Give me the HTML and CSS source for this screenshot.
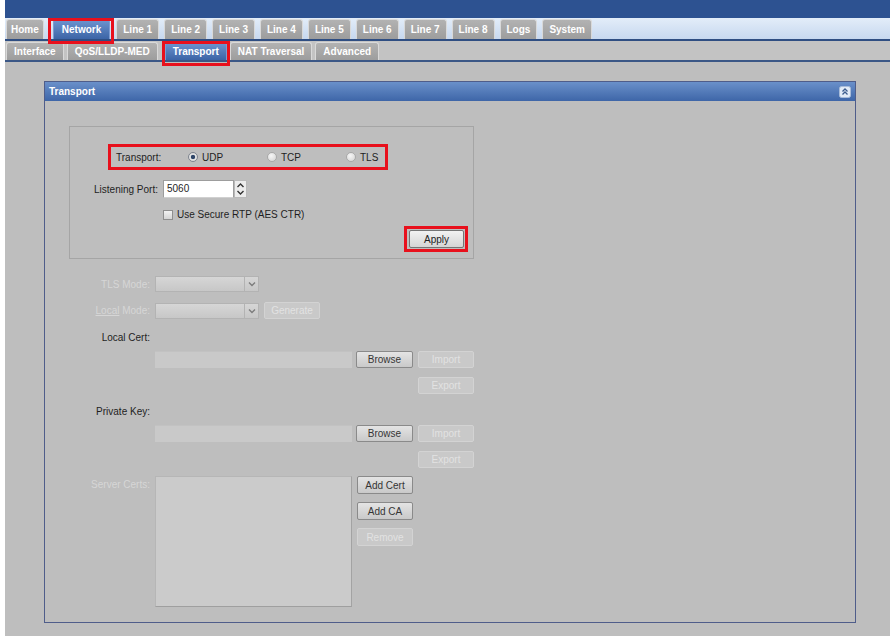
FILE: index.html
```html
<!DOCTYPE html>
<html>
<head>
<meta charset="utf-8">
<title>Transport</title>
<link rel="stylesheet" href="styles.css">
</head>
<body>
<div class="page">
  <div class="topbar"></div>
  <div class="tabs">
    <span class="tab first">Home</span>
    <span class="tab active">Network</span>
    <span class="tab">Line 1</span>
    <span class="tab">Line 2</span>
    <span class="tab">Line 3</span>
    <span class="tab">Line 4</span>
    <span class="tab">Line 5</span>
    <span class="tab">Line 6</span>
    <span class="tab">Line 7</span>
    <span class="tab">Line 8</span>
    <span class="tab">Logs</span>
    <span class="tab">System</span>
  </div>
  <div class="subtabs">
    <span class="stab">Interface</span>
    <span class="stab">QoS/LLDP-MED</span>
    <span class="stab active">Transport</span>
    <span class="stab">NAT Traversal</span>
    <span class="stab">Advanced</span>
  </div>
  <div class="panel">
    <div class="panel-head">
      <span>Transport</span>
      <svg class="collapse" width="12" height="12" viewBox="0 0 12 12">
        <rect x="0.5" y="0.5" width="11" height="11" rx="2" fill="#e2ebf7" stroke="#a9bcd9"/>
        <path d="M3.5 5.5 L6 3 L8.5 5.5 M3.5 8.5 L6 6 L8.5 8.5" fill="none" stroke="#3b5b8c" stroke-width="1.3"/>
      </svg>
    </div>
    <div class="panel-body">
      <div class="box">
        <div class="trow">
          <span class="tlabel">Transport:</span>
          <span class="opt"><span class="radio checked"></span>UDP</span>
          <span class="opt"><span class="radio"></span>TCP</span>
          <span class="opt last"><span class="radio"></span>TLS</span>
        </div>
        <div class="prow">
          <span class="plabel">Listening Port:</span>
          <span class="num">5060</span>
          <span class="spin">
            <svg width="13" height="18" viewBox="0 0 13 18">
              <rect x="0.5" y="0.5" width="12" height="17" fill="#ececec" stroke="#b9b9b9"/>
              <path d="M3.5 7 L6.5 4 L9.5 7" fill="none" stroke="#333" stroke-width="1.4"/>
              <path d="M3.5 11 L6.5 14 L9.5 11" fill="none" stroke="#333" stroke-width="1.4"/>
            </svg>
          </span>
        </div>
        <div class="crow">
          <span class="check"></span>
          <span>Use Secure RTP (AES CTR)</span>
        </div>
        <div class="arow">
          <span class="btn apply">Apply</span>
        </div>
      </div>

      <div class="tls">
        <div class="row r-tls">
          <span class="lbl dis">TLS Mode:</span>
          <span class="select"><span class="sel-arrow"><svg width="8" height="6" viewBox="0 0 8 6"><path d="M1 1.5 L4 4.5 L7 1.5" fill="none" stroke="#7d7d7d" stroke-width="1.4"/></svg></span></span>
        </div>
        <div class="row r-mode">
          <span class="lbl dis"><u>Local</u> Mode:</span>
          <span class="select"><span class="sel-arrow"><svg width="8" height="6" viewBox="0 0 8 6"><path d="M1 1.5 L4 4.5 L7 1.5" fill="none" stroke="#7d7d7d" stroke-width="1.4"/></svg></span></span>
          <span class="btn disabled gen">Generate</span>
        </div>
        <div class="row r-label">
          <span class="lbl">Local Cert:</span>
        </div>
        <div class="row r-input">
          <span class="lbl"></span>
          <span class="field"></span>
          <span class="btn browse">Browse</span>
          <span class="btn disabled imp">Import</span>
        </div>
        <div class="row r-export">
          <span class="btn disabled exp">Export</span>
        </div>
        <div class="row r-label2">
          <span class="lbl">Private Key:</span>
        </div>
        <div class="row r-input">
          <span class="lbl"></span>
          <span class="field"></span>
          <span class="btn browse">Browse</span>
          <span class="btn disabled imp">Import</span>
        </div>
        <div class="row r-export">
          <span class="btn disabled exp">Export</span>
        </div>
        <div class="row r-certs">
          <span class="lbl dis top">Server Certs:</span>
          <span class="area"></span>
          <span class="btncol">
            <span class="btn">Add Cert</span>
            <span class="btn">Add CA</span>
            <span class="btn disabled">Remove</span>
          </span>
        </div>
      </div>
    </div>
  </div>
</div>
</body>
</html>
```

FILE: styles.css
```css
html, body {
  margin: 0;
  padding: 0;
  background: #ffffff;
}
body {
  font-family: "Liberation Sans", Arial, sans-serif;
  font-size: 10px;
  color: #1e1e1e;
}
.page {
  margin: 0 5px;
  height: 636px;
  background: #bebebe;
  display: flex;
  flex-direction: column;
}
.topbar {
  height: 18px;
  background: #2d5291;
  flex: none;
}
.tabs {
  flex: none;
  height: 21px;
  background: linear-gradient(#e3edf9, #c7d8ef);
  border-bottom: 2px solid #2f4e82;
  display: flex;
  align-items: flex-end;
  gap: 5px;
  padding-left: 1px;
}
.tab, .stab {
  box-sizing: border-box;
  color: #ffffff;
  font-weight: bold;
  background: linear-gradient(#b2b2b2, #9d9d9d);
  border: 1px solid #d9d9d9;
  border-bottom: none;
  border-radius: 3px 3px 0 0;
  white-space: nowrap;
}
.tab {
  height: 20px;
  line-height: 19px;
  padding: 0 6px;
}
.tab.first {
  padding: 0 4px;
}
.tab.active {
  background: linear-gradient(#6d94cf, #3c64a6);
  border-color: #7c9bd0;
  position: relative;
  margin: 0 1px 0 4px;
  padding: 0 8px;
}
.tab.active::after {
  content: "";
  position: absolute;
  left: -6px;
  right: -5px;
  top: -2px;
  bottom: -5px;
  border: 3px solid #e8101c;
}
.subtabs {
  flex: none;
  height: 19px;
  background: #c3c3c3;
  border-bottom: 2px solid #3b5786;
  display: flex;
  align-items: flex-end;
  gap: 3px;
  padding-left: 1px;
}
.stab {
  height: 18px;
  line-height: 17px;
  padding: 0 7px;
}
.stab.active {
  background: linear-gradient(#6d94cf, #3c64a6);
  border-color: #7c9bd0;
  position: relative;
  margin: 0 0 0 4px;
}
.stab.active::after {
  content: "";
  position: absolute;
  left: -4px;
  right: -4px;
  top: -2px;
  bottom: -6px;
  border: 3px solid #e8101c;
}
.panel {
  flex: 1;
  margin: 19px 34px 13px 39px;
  border: 1px solid #4f5d8a;
  display: flex;
  flex-direction: column;
}
.panel-head {
  flex: none;
  height: 19px;
  background: linear-gradient(#6a90ca, #3e66a8);
  color: #ffffff;
  font-weight: bold;
  display: flex;
  align-items: center;
  justify-content: space-between;
  padding: 0 4px;
}
.collapse {
  display: block;
}
.panel-body {
  padding: 25px 0 0 24px;
}
.box {
  box-sizing: border-box;
  width: 405px;
  height: 133px;
  border: 1px solid #a5a5a5;
  display: flex;
  flex-direction: column;
}
.trow {
  align-self: flex-start;
  display: flex;
  align-items: center;
  height: 14px;
  margin: 23px 0 0 46px;
  position: relative;
}
.trow::after {
  content: "";
  position: absolute;
  left: -8px;
  right: -10px;
  top: -6px;
  bottom: -6px;
  border: 3px solid #e8101c;
}
.tlabel {
  width: 72px;
}
.opt {
  width: 79px;
  display: flex;
  align-items: center;
}
.opt.last {
  width: auto;
}
.radio {
  box-sizing: border-box;
  width: 10px;
  height: 10px;
  border-radius: 50%;
  border: 1px solid #a9a9a9;
  background: radial-gradient(circle at 40% 35%, #f6f6f6, #d2d2d2);
  margin-right: 4px;
}
.radio.checked {
  border-color: #7f8590;
  background: radial-gradient(circle, #2f4669 0, #2f4669 1.8px, #e6e6e6 2.6px, #cfcfcf 100%);
}
.prow {
  display: flex;
  align-items: center;
  margin-top: 16px;
}
.plabel {
  width: 88px;
  text-align: right;
  margin-right: 5px;
}
.num {
  box-sizing: border-box;
  width: 71px;
  height: 18px;
  line-height: 16px;
  background: #ffffff;
  border: 1px solid #9d9d9d;
  border-bottom-color: #d0d0d0;
  padding-left: 3px;
}
.spin svg {
  display: block;
}
.crow {
  display: flex;
  align-items: center;
  margin: 11px 0 0 93px;
}
.check {
  box-sizing: border-box;
  width: 10px;
  height: 10px;
  border: 1px solid #8e8e8e;
  background: linear-gradient(#f2f2f2, #d4d4d4);
  margin-right: 4px;
}
.arow {
  display: flex;
  justify-content: flex-end;
  margin: 10px 9px 0 0;
}
.btn {
  box-sizing: border-box;
  display: flex;
  align-items: center;
  justify-content: center;
  height: 17px;
  width: 57px;
  border: 1px solid #8a8a8a;
  border-radius: 2px;
  background: linear-gradient(#e4e4e4, #c9c9c9);
  color: #353535;
  flex: none;
}
.btn.apply {
  width: 55px;
  height: 18px;
  border-color: #757575;
  background: linear-gradient(#f2f2f2, #d5d5d5);
  color: #222;
  position: relative;
}
.btn.apply::after {
  content: "";
  position: absolute;
  left: -6px;
  right: -5px;
  top: -5px;
  bottom: -5px;
  border: 3px solid #e8101c;
}
.btn.disabled {
  border-color: #d3d3d3;
  background: #c9c9c9;
  color: #e2e2e2;
}
.tls {
  display: flex;
  flex-direction: column;
  margin-top: 17px;
}
.row {
  display: flex;
  align-items: center;
}
.lbl {
  width: 81px;
  text-align: right;
  margin-right: 5px;
  flex: none;
  white-space: nowrap;
}
.lbl.dis {
  color: #d6d6d6;
}
.lbl.top {
  align-self: flex-start;
  line-height: 18px;
}
.select {
  box-sizing: border-box;
  width: 104px;
  height: 16px;
  border: 1px solid #b3b3b3;
  background: linear-gradient(#d6d6d6, #c7c7c7);
  display: flex;
  justify-content: flex-end;
}
.sel-arrow {
  width: 13px;
  border-left: 1px solid #b3b3b3;
  display: flex;
  align-items: center;
  justify-content: center;
}
.sel-arrow svg {
  display: block;
}
.r-mode {
  margin-top: 10px;
}
.gen {
  margin-left: 5px;
  width: 56px;
}
.r-label, .r-label2 {
  margin-top: 10px;
  height: 16px;
}
.r-label2 {
  margin-top: 9px;
}
.r-input {
  margin-top: 6px;
}
.field {
  width: 197px;
  height: 17px;
  background: #c9c9c9;
  border-top: 1px solid #c2c2c2;
  box-sizing: border-box;
}
.browse {
  margin-left: 4px;
  width: 57px;
}
.imp {
  margin-left: 5px;
  width: 56px;
}
.r-export {
  margin-top: 9px;
}
.exp {
  margin-left: 349px;
  width: 56px;
}
.r-certs {
  margin-top: 8px;
  align-items: flex-start;
}
.area {
  box-sizing: border-box;
  width: 197px;
  height: 131px;
  background: #cbcbcb;
  border: 1px solid #b6b6b6;
  border-right-color: #a3a3a3;
  border-bottom-color: #9f9f9f;
}
.btncol {
  margin-left: 5px;
  display: flex;
  flex-direction: column;
  gap: 8px;
}
.btncol .btn {
  width: 56px;
  height: 18px;
}
```
